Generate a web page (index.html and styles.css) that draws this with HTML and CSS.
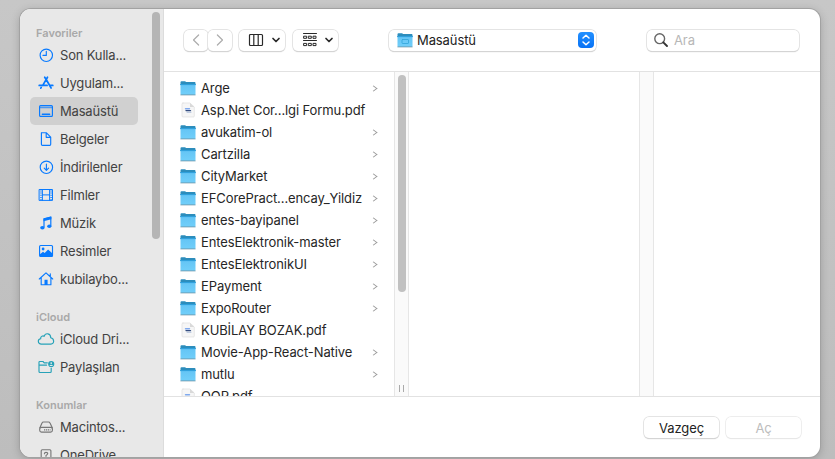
FILE: index.html
```
<!DOCTYPE html>
<html lang="tr">
<head>
<meta charset="utf-8">
<title>Masaüstü</title>
<link rel="stylesheet" href="styles.css">
</head>
<body>
<svg class="defs" width="0" height="0">
  <defs>
    <linearGradient id="fold" x1="0" y1="0" x2="0" y2="1"><stop offset="0" stop-color="#64c4f4"/><stop offset="1" stop-color="#71cffa"/></linearGradient>
    <symbol id="folder" viewBox="0 0 16 16">
      <path d="M.5 2.2Q.5 1.2 1.5 1.2H5L6.2 2.1H14.6Q15.5 2.1 15.5 3.1V5H.5Z" fill="#2c8dbc"/>
      <path d="M.5 4.2H15.5V14Q15.5 15 14.5 15H1.5Q.5 15 .5 14Z" fill="url(#fold)"/>
      <path d="M.8 14.9H15.2" stroke="#6a94a8" stroke-width=".8"/>
      <path d="M.5 4.6H15.5" stroke="#2c9edb" stroke-width="1"/>
    </symbol>
    <symbol id="pdf" viewBox="0 0 16 16">
      <path d="M3 1H10L14.3 5V14Q14.3 15 13.3 15H3Q2 15 2 14V2Q2 1 3 1Z" fill="#f6f6f6" stroke="#dedede" stroke-width=".7"/>
      <path d="M10 1V5H14.3Z" fill="#d9d9d9"/>
      <path d="M5.5 6.8H9.5" stroke="#80a9ed" stroke-width="1.4"/>
      <path d="M6 8.6H10.5" stroke="#344d80" stroke-width="1.4"/>
      <path d="M7 10.2H11" stroke="#a9bad8" stroke-width="1"/>
    </symbol>
  </defs>
</svg>
<div class="window">
  <aside class="sidebar">
    <nav class="places">
      <h2>Favoriler</h2>
      <a><svg viewBox="0 0 16 16"><circle cx="8.3" cy="8.3" r="6.2"/><path d="M8.3 4.2V8.4H5"/></svg><span>Son Kulla...</span></a>
      <a><svg viewBox="0 0 16 16"><path d="M6.7 2.2 8.3 4.8M9.5 2.2 4.6 10.6M8.5 5 13.1 13M1.2 10.4H9.1M11.8 10.4H14.8M3.2 12.5 2.8 13.2" stroke-width="1.7"/></svg><span>Uygulam...</span></a>
      <a class="selected"><svg viewBox="0 0 16 16"><rect x="1.6" y="2.6" width="12.8" height="10.8" rx="1"/><path d="M2 4.5H14" stroke-width="1.4" opacity=".65"/><path d="M4.4 11.3H11.6" stroke-width="1.5"/></svg><span>Masaüstü</span></a>
      <a><svg viewBox="0 0 16 16"><path d="M3.5 1.7H8.2L12.7 6.2V13.2Q12.7 14.3 11.6 14.3H4.5Q3.4 14.3 3.4 13.2V1.8M8.2 1.8V6.3H12.6"/></svg><span>Belgeler</span></a>
      <a><svg viewBox="0 0 16 16"><circle cx="8.4" cy="8.3" r="6.2"/><path d="M8.4 5V11.2M6.2 9.1 8.4 11.3 10.6 9.1"/></svg><span>İndirilenler</span></a>
      <a><svg viewBox="0 0 16 16"><path d="M1.5 2.5H14.5V13.4H1.5ZM4.4 2.5V13.4M11.6 2.5V13.4M4.4 7.9H11.6" stroke-width="1"/><path d="M3 3.4V13M13.1 3.4V13" stroke-dasharray="1 1.2" stroke-width="1.4" stroke-linecap="butt"/></svg><span>Filmler</span></a>
      <a><svg viewBox="0 0 16 16"><path d="M6 12V3.8L12.8 2.2V10.7" stroke-width="1.2"/><path d="M5.5 3.4 13.4 1.5V4.3L5.5 6.2Z" class="solid"/><ellipse cx="4.4" cy="12.7" rx="2.2" ry="1.8" class="solid"/><ellipse cx="11.3" cy="11.2" rx="2.1" ry="1.8" class="solid"/></svg><span>Müzik</span></a>
      <a><svg viewBox="0 0 16 16"><rect x="1.6" y="2.5" width="12.9" height="11" rx="1"/><circle cx="5.1" cy="6" r="1.4" class="solid"/><path d="M2 11.2 5 8.8 6.7 10 10.1 6.5 14.5 10.5V13.4H2Z" class="solid"/></svg><span>Resimler</span></a>
      <a><svg viewBox="0 0 16 16"><path d="M1.3 8 8 1.9 14.7 8M3.2 6.8V13.7H12.9V6.8M12.3 2.8V5.6"/><path d="M6.5 8.8H9.6V14H6.5Z" class="solid"/></svg><span>kubilaybo...</span></a>
      <h2 class="next">iCloud</h2>
      <a class="teal"><svg class="wide" viewBox="0 0 18 16"><path d="M4.4 13.1C.4 13.1.4 8.1 3.7 7.7 3.2 4.9 6.3 4.5 7.1 5.4 8.5 1.2 13.8 2.3 13.7 6.8 17.6 7.5 17.6 13.1 13.9 13.1Z"/></svg><span>iCloud Dri...</span></a>
      <a class="teal"><svg class="wide" viewBox="0 0 18 16"><path d="M10.3 3.8H7.2L6 2.5H2.8Q2 2.5 2 3.3V12.5Q2 13.5 3 13.5H13.2Q14.2 13.5 14.2 12.5V9M2 6.1H9.6"/><circle cx="14.2" cy="5" r="3.1" class="solid"/><circle cx="14.2" cy="4.1" r=".9" fill="#e8e8e8" stroke="none"/><path d="M12.3 6.9Q14.2 4.6 16.1 6.9Z" fill="#e8e8e8" stroke="none"/></svg><span>Paylaşılan</span></a>
      <h2 class="next">Konumlar</h2>
      <a class="gray"><svg viewBox="0 0 16 16"><path d="M1.8 9 4 4Q4.4 3 5.5 3H10.5Q11.6 3 12 4L14.4 9"/><rect x="1.7" y="8.3" width="12.7" height="4.8" rx="1.8"/><path d="M6 10.8H12.5" stroke-dasharray="1.2 .7" stroke-linecap="butt"/></svg><span>Macintos...</span></a>
      <a class="gray"><svg viewBox="0 0 16 16"><rect x="3.2" y="2.7" width="9.7" height="11" rx="1"/><path d="M6.4 6.8Q6.5 5.4 8 5.4 9.8 5.4 9.7 6.8 9.6 7.6 8 8.6V9.2M8 10.4V11.4"/></svg><span>OneDrive</span></a>
    </nav>
    <div class="thumb"></div>
  </aside>
  <main>
    <header class="toolbar">
      <button class="nav"><svg width="10" height="14" viewBox="0 0 10 14"><path d="M7.6 2 2.5 7 7.6 12"/></svg></button>
      <button class="nav"><svg width="10" height="14" viewBox="0 0 10 14"><path d="M2.4 2 7.5 7 2.4 12"/></svg></button>
      <button class="view"><svg width="16" height="14" viewBox="0 0 16 14"><rect x="1.5" y="1.5" width="13" height="11" rx="1"/><path d="M5.8 1.5V12.5M10.2 1.5V12.5"/></svg><svg width="10" height="8" viewBox="0 0 10 8"><path d="M2 2.5 5 5.5 8 2.5" stroke-width="1.7"/></svg></button>
      <button class="group"><svg width="16" height="16" viewBox="0 0 16 16"><path d="M1.5 1.5H14.5M1.5 8.5H14.5" stroke-width="1"/><path d="M2 4.2H4.6V6.3H2ZM6.7 4.2H9.3V6.3H6.7ZM11.4 4.2H14V6.3H11.4ZM2 11.4H4.6V13.6H2ZM6.7 11.4H9.3V13.6H6.7ZM11.4 11.4H14V13.6H11.4Z" stroke-width="1"/></svg><svg width="10" height="8" viewBox="0 0 10 8"><path d="M2 2.5 5 5.5 8 2.5" stroke-width="1.7"/></svg></button>
      <button class="location"><svg width="16" height="16" viewBox="0 0 16 16"><use href="#folder" stroke="none"/><rect x="5" y="7.5" width="6.5" height="4" rx=".5" stroke="#38a8db" stroke-width=".9"/></svg><span>Masaüstü</span><i><svg width="10" height="14" viewBox="0 0 10 14"><path d="M2 5 5 2.2 8 5M2 9 5 11.8 8 9" stroke="#fff" stroke-width="1.5"/></svg></i></button>
      <label class="search"><svg width="16" height="16" viewBox="0 0 16 16"><circle cx="6.7" cy="6.7" r="4.9" stroke="#666" stroke-width="1.4"/><path d="M10.3 10.3 14 14" stroke="#333" stroke-width="1.9"/></svg><span>Ara</span></label>
    </header>
    <section class="browser">
      <ul class="files">
        <li><svg><use href="#folder"/></svg><span>Arge</span><b></b></li>
        <li><svg><use href="#pdf"/></svg><span>Asp.Net Cor...lgi Formu.pdf</span></li>
        <li><svg><use href="#folder"/></svg><span>avukatim-ol</span><b></b></li>
        <li><svg><use href="#folder"/></svg><span>Cartzilla</span><b></b></li>
        <li><svg><use href="#folder"/></svg><span>CityMarket</span><b></b></li>
        <li><svg><use href="#folder"/></svg><span>EFCorePract...encay_Yildiz</span><b></b></li>
        <li><svg><use href="#folder"/></svg><span>entes-bayipanel</span><b></b></li>
        <li><svg><use href="#folder"/></svg><span>EntesElektronik-master</span><b></b></li>
        <li><svg><use href="#folder"/></svg><span>EntesElektronikUI</span><b></b></li>
        <li><svg><use href="#folder"/></svg><span>EPayment</span><b></b></li>
        <li><svg><use href="#folder"/></svg><span>ExpoRouter</span><b></b></li>
        <li><svg><use href="#pdf"/></svg><span>KUBİLAY BOZAK.pdf</span></li>
        <li><svg><use href="#folder"/></svg><span>Movie-App-React-Native</span><b></b></li>
        <li><svg><use href="#folder"/></svg><span>mutlu</span><b></b></li>
        <li><svg><use href="#pdf"/></svg><span>OOP.pdf</span></li>
      </ul>
      <div class="scroller"><div class="knob"></div><div class="grip"></div></div>
      <div class="empty"></div>
      <div class="scroller"></div>
    </section>
    <footer><button class="cancel">Vazgeç</button><button class="open" disabled>Aç</button></footer>
  </main>
</div>
</body>
</html>
```
FILE: styles.css
```
* { box-sizing: border-box; }
html, body { height: 100%; }
body {
  margin: 0;
  padding: 9px 15px 0 20px;
  overflow: hidden;
  background: linear-gradient(180deg, #c7c7c7, #bdbdbd);
  font: 13px/16px Inter, "Liberation Sans", sans-serif;
  letter-spacing: -.1px;
  color: #262626;
}
.defs { position: absolute; }
svg { display: block; flex: none; fill: none; stroke-linecap: round; stroke-linejoin: round; }
.window {
  display: flex;
  width: 800px;
  height: 448px;
  border-radius: 11px;
  overflow: hidden;
  background: #fff;
  box-shadow: 0 0 0 1px #a2a2a2, 0 2px 10px rgba(0, 0, 0, .22);
}
.sidebar {
  display: flex;
  justify-content: space-between;
  width: 144px;
  padding: 3px 3px 0 10px;
  background: #e8e8e8;
  border-right: 1px solid #dcdcdc;
}
.places { width: 108px; padding-top: 13px; }
.places h2 { margin: 0; padding-left: 6px; height: 16px; font-size: 11px; line-height: 16px; font-weight: 600; letter-spacing: 0; color: #a9a9a9; }
.places h2.next { margin: 16px 0 0; padding-bottom: 2px; }
.places a { display: flex; align-items: center; gap: 6px; height: 28px; padding-left: 8px; border-radius: 5px; white-space: nowrap; letter-spacing: -.18px; color: #424242; }
.places a svg { width: 16px; height: 16px; stroke: #087aff; stroke-width: 1.15; color: #087aff; }
.places a svg.wide { width: 18px; margin: 0 -1px 0 -1px; }
.places .solid { fill: currentColor; stroke: none; }
.places .selected { background: #d0d0d0; }
.places .teal svg { stroke: #27a2b8; color: #27a2b8; }
.places .gray svg { stroke: #777; color: #777; }
.thumb { width: 8px; height: 227px; border-radius: 4px; background: #b5b5b5; }
main { display: flex; flex-direction: column; width: 656px; }
.toolbar { display: flex; align-items: center; height: 63px; padding-left: 20px; border-bottom: 1px solid #e2e2e2; }
button, .search {
  display: flex;
  align-items: center;
  height: 21px;
  padding: 0;
  border: 0;
  border-radius: 5px;
  background: #fff;
  box-shadow: 0 0 0 .7px #dcdcdc, 0 1px 1px rgba(0, 0, 0, .28);
  font: inherit;
  letter-spacing: inherit;
  color: #222;
}
.toolbar svg { stroke: #292929; stroke-width: 1.2; }
.nav { width: 24px; justify-content: center; }
.toolbar .nav svg { stroke: #acacac; }
.view { width: 46px; margin-left: 7px; padding-left: 9px; gap: 7px; }
.group { width: 45px; margin-left: 8px; padding-left: 9px; gap: 6px; }
.location { width: 207px; margin-left: 51px; padding: 0 2px 0 8px; gap: 4px; }
.location i { display: flex; align-items: center; justify-content: center; width: 16px; height: 16px; margin-left: auto; border-radius: 4px; background: linear-gradient(#2290ff, #0872f5); }
.search { width: 152px; margin-left: 51px; padding-left: 6px; gap: 5px; color: #b7b7b7; }
.browser { display: flex; height: 325px; border-bottom: 1px solid #e2e2e2; overflow: hidden; }
.files { width: 230px; margin: 0; padding: 5px 15px 0 16px; list-style: none; }
.files li { display: flex; align-items: center; gap: 5px; height: 22px; white-space: nowrap; }
.files svg { width: 16px; height: 16px; }
.files b { width: 5px; height: 5px; margin: 0 3px 0 auto; border: solid #999; border-width: 1px 1px 0 0; transform: rotate(45deg) skew(-8deg, -8deg); }
.scroller { display: flex; flex-direction: column; align-items: center; justify-content: space-between; width: 15px; padding: 3px 0 4px; border: solid #e6e6e6; border-width: 0 1px; background: #fafafa; }
.knob { width: 8px; height: 217px; border-radius: 4px; background: #c1c1c1; }
.grip { width: 5px; height: 7px; border: solid #aaa; border-width: 0 1px; }
.empty { width: 230px; }
footer { display: flex; gap: 7px; padding: 20px 0 0 480px; }
footer button { width: 75px; justify-content: center; }
footer .open { color: #bdbdbd; box-shadow: 0 0 0 .7px #e8e8e8, 0 1px 1px rgba(0, 0, 0, .12); }
```
